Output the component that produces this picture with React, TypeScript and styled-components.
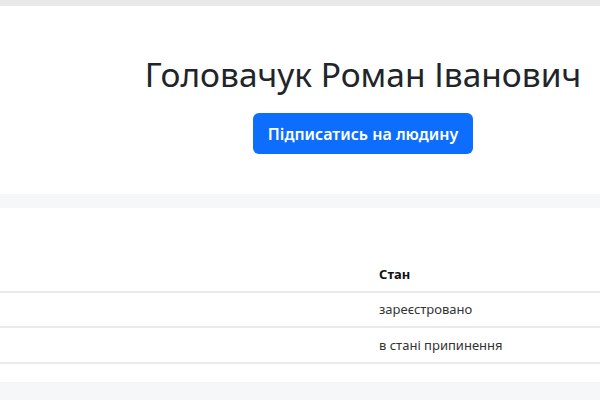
import styled, { createGlobalStyle } from "styled-components";

const GlobalStyle = createGlobalStyle`
    html, body {
        margin: 0;
        padding: 0;
        background: #f6f7f9;
        font-family: "Noto Sans", "Open Sans", sans-serif;
        color: #212529;
    }
`

const Page = styled.div`
    width: 600px;
    height: 400px;
    overflow: hidden;
    border-top: 6px solid #e8e8e9;
    box-sizing: border-box;
    background: #f6f7f9;
`

const Card = styled.section<{ $height: number }>`
    background: #fff;
    height: ${props => props.$height}px;
    box-sizing: border-box;
`

const Header = styled(Card)`
    display: flex;
    flex-direction: column;
    align-items: center;
    padding: 46px 0 0 126px;
    margin-bottom: 14px;
`

const Title = styled.h1`
    margin: 0;
    font-size: 33.5px;
    font-weight: 400;
    line-height: 44px;
    white-space: nowrap;
`

const FollowButton = styled.button`
    margin-top: 17px;
    height: 41px;
    padding: 0 15px;
    background: #0d6efd;
    color: #fff;
    border: none;
    border-radius: 6px;
    font-family: inherit;
    font-size: 16px;
    font-weight: 600;
    cursor: pointer;
`

const TableCard = styled(Card)`
    padding-top: 49px;
`

const Table = styled.div`
    display: grid;
    grid-template-columns: 371px 1fr;
    font-size: 13px;
`

const Cell = styled.div<{ $head?: boolean }>`
    padding: 0 8px;
    height: 35.5px;
    display: flex;
    align-items: center;
    border-bottom: 2px solid #e9eaec;
    box-sizing: border-box;
    font-weight: ${props => props.$head ? 700 : 400};
    color: ${props => props.$head ? '#111' : '#333'};
`

const rows = ['зареєстровано', 'в стані припинення'];

const App = () => {
    return (
        <>
            <GlobalStyle />
            <Page>
                <Header $height={188}>
                    <Title>Головачук Роман Іванович</Title>
                    <FollowButton>Підписатись на людину</FollowButton>
                </Header>
                <TableCard $height={174}>
                    <Table>
                        <Cell $head />
                        <Cell $head>Стан</Cell>
                        {rows.map(r => (
                            <>
                                <Cell />
                                <Cell>{r}</Cell>
                            </>
                        ))}
                    </Table>
                </TableCard>
            </Page>
        </>
    )
}

export default App;
